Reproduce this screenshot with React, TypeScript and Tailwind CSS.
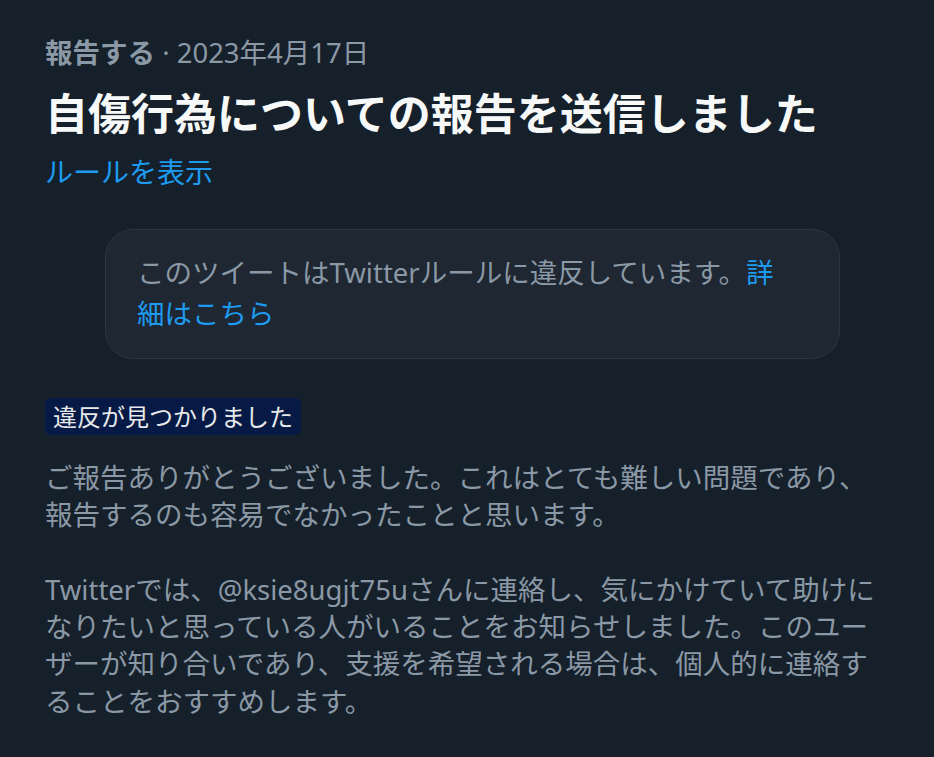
const FONT = { fontFamily: '"Noto Sans", "Noto Sans CJK JP", sans-serif' };

export default function App() {
  return (
    <div
      className="min-h-[757px] w-full bg-[#15202b] px-[45px] pt-[34px] text-[#8b98a5]"
      style={FONT}
    >
      <p className="text-[27.5px] leading-[37px]">
        <span className="font-bold">報告する</span>
        <span> · 2023年4月17日</span>
      </p>
      <h1 className="mt-[18px] text-[43px] font-bold leading-[50px] text-[#f7f9f9]">
        自傷行為についての報告を送信しました
      </h1>
      <a className="mt-[15px] block text-[28px] leading-[37px] text-[#1d9bf0]">ルールを表示</a>

      <div className="ml-[60px] mt-[38px] w-[735px] rounded-[28px] border border-[#2b3640] bg-[#1e2732] pb-[24px] pl-[31px] pr-[45px] pt-[22px]">
        <p className="text-[27.5px] leading-[41px]">
          このツイートはTwitterルールに違反しています。<a className="text-[#1d9bf0]">詳細はこちら</a>
        </p>
      </div>

      <div className="mt-[39px] inline-block rounded-[6px] bg-[#061a45] px-[8px] text-[24px] leading-[37px] text-[#e7e9ea]">
        違反が見つかりました
      </div>

      <div className="mt-[24px] text-[27.5px] leading-[37.3px]">
        <p>
          ご報告ありがとうございました。これはとても難しい問題であり、報告するのも容易でなかったことと思います。
        </p>
        <br />
        <p>
          Twitterでは、@ksie8ugjt75uさんに連絡し、気にかけていて助けになりたいと思っている人がいることをお知らせしました。このユーザーが知り合いであり、支援を希望される場合は、個人的に連絡することをおすすめします。
        </p>
      </div>
    </div>
  );
}
